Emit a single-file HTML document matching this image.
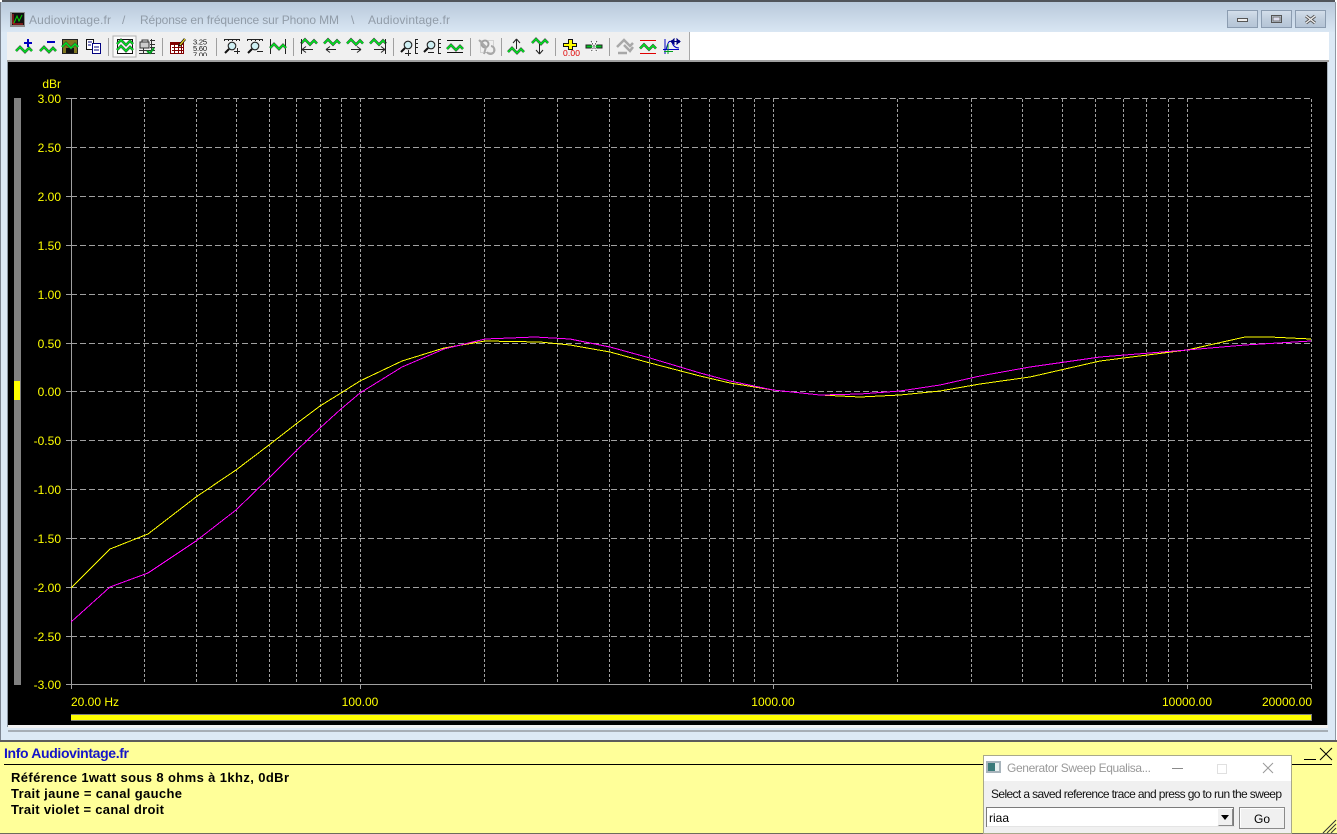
<!DOCTYPE html>
<html lang="fr"><head><meta charset="utf-8"><title>Audiovintage.fr</title>
<style>
html,body{margin:0;padding:0;width:1337px;height:834px;overflow:hidden;background:#dce9f5}
svg{display:block;position:absolute;left:0;top:0}
text{font-family:"Liberation Sans",Arial,sans-serif}
.y{fill:#ff0;font-size:12px;text-anchor:end}
.m{fill:#ff0;font-size:12px;text-anchor:middle}
.t{fill:#919ca8;font-size:12px}
.b{fill:#000;font-size:13px;font-weight:bold}
</style></head><body>
<svg width="1337" height="834" viewBox="0 0 1337 834" shape-rendering="crispEdges">
<defs>
<linearGradient id="tb" x1="0" y1="0" x2="0" y2="1"><stop offset="0" stop-color="#b6c7d9"/><stop offset="1" stop-color="#d9e6f3"/></linearGradient>
<linearGradient id="bt" x1="0" y1="0" x2="0" y2="1"><stop offset="0" stop-color="#d4dfeb"/><stop offset=".5" stop-color="#c0cedd"/><stop offset="1" stop-color="#b4c4d6"/></linearGradient>
<g id="w" fill="none" shape-rendering="auto"><path d="M0 6 4 2 9 7 13 3 16 6" stroke="#333" stroke-width="2.600"/><path d="M0 6 4 2 9 7 13 3 16 6" stroke="#00e020" stroke-width="1.600"/></g>
</defs>
<!-- window frame -->
<rect width="1337" height="834" fill="#dce9f5"/>
<rect width="1337" height="32" fill="url(#tb)"/>
<rect width="1337" height="2" fill="#50545a"/>
<rect x="0" y="0" width="1" height="740" fill="#7d8590"/>
<rect x="1336" y="0" width="1" height="740" fill="#fff"/>
<rect x="1335" y="0" width="1" height="740" fill="#8e98a3"/>
<rect x="0" y="0" width="2" height="2" fill="#fff"/><rect x="1335" y="0" width="2" height="2" fill="#fff"/>
<!-- title -->
<rect x="10" y="12" width="15" height="15" fill="#8c8c8c"/><rect x="12" y="13" width="12" height="12" fill="#111"/>
<path d="M13 24H23M13 14V24" stroke="#e02020" fill="none"/><path d="M14 23 17 16 19 21 22 15" stroke="#00d000" fill="none" shape-rendering="auto"/>
<text class="t" x="29" y="24" textLength="82">Audiovintage.fr</text>
<text class="t" x="122" y="24">/</text>
<text class="t" x="140" y="24" textLength="199">Réponse en fréquence sur Phono MM</text>
<text class="t" x="351" y="24">\</text>
<text class="t" x="368" y="24" textLength="82">Audiovintage.fr</text>
<!-- window buttons -->
<g stroke="#8b9cb0" fill="url(#bt)"><rect x="1227.500" y="10.500" width="30" height="17"/><rect x="1261.500" y="10.500" width="30" height="17"/><rect x="1295.500" y="10.500" width="30" height="17"/></g>
<rect x="1237.500" y="18.500" width="10" height="3" fill="#eee" stroke="#555"/>
<rect x="1271.500" y="15.500" width="10" height="7" fill="none" stroke="#555" stroke-width="1"/><rect x="1273" y="17" width="7" height="4" fill="#dde" stroke="#777"/>
<path d="M1306 16 1315 23M1315 16 1306 23" stroke="#555" stroke-width="3.200" shape-rendering="auto"/><path d="M1306 16 1315 23M1315 16 1306 23" stroke="#eee" stroke-width="1.400" shape-rendering="auto"/>
<!-- toolbar -->
<rect x="7" y="32" width="1322" height="29" fill="#fff"/>
<rect x="7" y="32" width="683" height="28" fill="#f0f0f0"/>
<rect x="689" y="32" width="1" height="28" fill="#a8a8a8"/>
<rect x="7" y="60" width="1322" height="2" fill="#a0a0a0"/>
<!-- separators -->
<g fill="#a0a0a0"><rect x="108" y="38" width="1" height="18"/><rect x="162" y="38" width="1" height="18"/><rect x="216" y="38" width="1" height="18"/><rect x="293" y="38" width="1" height="18"/><rect x="393" y="38" width="1" height="18"/><rect x="470" y="38" width="1" height="18"/><rect x="501" y="38" width="1" height="18"/><rect x="555" y="38" width="1" height="18"/><rect x="609" y="38" width="1" height="18"/></g>
<!-- 1 add -->
<use href="#w" x="16" y="45"/><path d="M28 39V47M24 43H32" stroke="#0000c0" stroke-width="2" fill="none"/>
<!-- 2 remove -->
<use href="#w" x="40" y="45"/><rect x="47" y="41" width="8" height="2" fill="#0000c0"/>
<!-- 3 save -->
<rect x="62.500" y="39.500" width="15" height="14" fill="#807820" stroke="#222"/><rect x="66" y="48" width="8" height="5" fill="#111"/><use href="#w" x="62" y="41"/>
<!-- 4 copy -->
<path d="M86.500 39.500H93.500V49.500H86.500Z" fill="#fff" stroke="#111"/><path d="M92.500 43.500H100.500V53.500H92.500Z" fill="#fff" stroke="#000080"/><path d="M88 42H92M88 45H91M94 47H99M94 50H99" stroke="#000080"/>
<!-- 5 active -->
<rect x="113" y="36" width="23" height="21" fill="#fafafa" stroke="#b0b0b0"/>
<rect x="117.500" y="39.500" width="15" height="14" fill="#fff" stroke="#111"/><use href="#w" x="117" y="38"/><use href="#w" x="117" y="44"/>
<!-- 6 printer -->
<rect x="140" y="42" width="9" height="6" fill="#ccc" stroke="#333"/><rect x="142" y="40" width="6" height="2" fill="#eee" stroke="#333"/>
<path d="M139 50.500H155M139 53.500H155M143.500 48V54M151.500 39V54M150 40.500H155M150 44.500H155M150 47.500H155" stroke="#333" fill="none"/><path d="M147 51 150 53 154 48" stroke="#00a020" stroke-width="2" fill="none" shape-rendering="auto"/>
<!-- 7 table pencil -->
<rect x="170.500" y="42.500" width="13" height="11" fill="#fff" stroke="#800000"/><rect x="170" y="42" width="14" height="3" fill="#800000"/>
<path d="M172 47.500H183M172 50.500H183M174.500 45V53M178.500 45V53M181.500 45V53" stroke="#800000" fill="none"/>
<path d="M179 46 185 39" stroke="#111" stroke-width="2.600" shape-rendering="auto"/><path d="M180 45 185 39" stroke="#e8d020" stroke-width="1.300" shape-rendering="auto"/>
<!-- 8 numbers -->
<g style="font-size:7.500px" fill="#111" shape-rendering="auto"><text x="193" y="44.500" textLength="14">3.25</text><text x="193" y="51" textLength="14">5.60</text><text x="193" y="57.500" textLength="14">7.00</text></g>
<rect x="190" y="56" width="20" height="4" fill="#f0f0f0"/>
<!-- 9 zoom + -->
<g id="z" fill="none"><path d="M224 39.500H240M224.500 39V41M228.500 39V41M232.500 39V41M236.500 39V41M239.500 39V41" stroke="#222"/><circle cx="232" cy="46" r="3.800" fill="#cff0f4" stroke="#222" stroke-width="1.100" shape-rendering="auto"/><path d="M229 49 225 53" stroke="#111" stroke-width="2" shape-rendering="auto"/></g>
<path d="M234 51.500H240M237.500 48V54" stroke="#222" fill="none"/>
<!-- 10 zoom - -->
<use href="#z" x="23"/><path d="M257 51.500H263" stroke="#222" fill="none"/>
<!-- 11 wave between bars -->
<path d="M270.500 39V54M285.500 39V54" stroke="#222" fill="none"/><use href="#w" x="270" y="42"/>
<!-- 12-15 wave arrows -->
<use href="#w" x="301" y="37.500"/><path d="M301.500 39V54M302 49.500H313M302 49.500 306 46.500M302 49.500 306 52.500" stroke="#222" fill="none" shape-rendering="auto"/>
<use href="#w" x="324" y="37.500"/><path d="M326 49.500H336M326 49.500 330 46.500M326 49.500 330 52.500" stroke="#222" fill="none" shape-rendering="auto"/>
<use href="#w" x="347" y="37.500"/><path d="M351 49.500H361M361 49.500 357 46.500M361 49.500 357 52.500" stroke="#222" fill="none" shape-rendering="auto"/>
<use href="#w" x="370" y="37.500"/><path d="M385.500 39V54M374 49.500H385M385 49.500 381 46.500M385 49.500 381 52.500" stroke="#222" fill="none" shape-rendering="auto"/>
<!-- 16 zoom v + -->
<g id="zv" fill="none"><circle cx="408" cy="45" r="3.800" fill="#cff0f4" stroke="#222" stroke-width="1.100" shape-rendering="auto"/><path d="M405 48 401 52" stroke="#111" stroke-width="2" shape-rendering="auto"/><path d="M415.500 39V54M416 39.500H418M416 43.500H418M416 47.500H418M416 53.500H418" stroke="#222"/></g>
<path d="M405 53.500H411M408.500 50V56" stroke="#222" fill="none"/>
<!-- 17 zoom v - -->
<use href="#zv" x="23"/><path d="M428 52.500H434" stroke="#222" fill="none"/>
<!-- 18 wave between horizontal -->
<path d="M447 40.500H463M447 52.500H463" stroke="#111" fill="none"/><use href="#w" x="447" y="43"/>
<!-- 19 disabled -->
<rect x="480.500" y="40.500" width="13" height="12" fill="none" stroke="#b5b5b5" stroke-dasharray="1 1"/>
<circle cx="485" cy="44" r="3.500" fill="none" stroke="#a0a0a0" stroke-width="2" shape-rendering="auto"/><path d="M479 40 486 47 484 54M487 52 A4 4 0 1 0 491 46" fill="none" stroke="#a8a8a8" stroke-width="2" shape-rendering="auto"/>
<!-- 20 up -->
<use href="#w" x="508" y="46"/><path d="M516.500 39V49M516.500 39 513 43M516.500 39 520 43" stroke="#222" fill="none" shape-rendering="auto"/>
<!-- 21 down -->
<use href="#w" x="532" y="37"/><path d="M539.500 44V54M539.500 54 536 50M539.500 54 543 50" stroke="#222" fill="none" shape-rendering="auto"/>
<!-- 22 cross -->
<path d="M568.500 39.500H572.500V43.500H576.500V46.500H572.500V49.500H568.500V46.500H563.500V43.500H568.500Z" fill="#ff0" stroke="#111"/>
<text x="563" y="56" textLength="17" style="font-size:8.500px" fill="#e00000" shape-rendering="auto">0.00</text>
<!-- 23 -->
<rect x="586" y="45" width="16" height="3" fill="#00c020" stroke="#222" stroke-width=".6"/>
<path d="M591 41 597 52M597 41 591 52" stroke="#fff" stroke-width="2.500" shape-rendering="auto"/><path d="M591 41 597 52M597 41 591 52" stroke="#222" stroke-width=".8" stroke-dasharray="1.500 1" shape-rendering="auto"/>
<!-- 24 disabled -->
<path d="M617 47 624 40 630 46 633 43M624 45 630 51 633 47M618 53H627" fill="none" stroke="#a8a8a8" stroke-width="2.500" shape-rendering="auto"/>
<!-- 25 -->
<path d="M640 40.500H656M640 53.500H656" stroke="#e00000" fill="none"/><use href="#w" x="640" y="42.500"/>
<!-- 26 -->
<path d="M665 39V54M663 49.500H679" stroke="#0000c0" fill="none"/><path d="M666 50C668 42 669 40 672 42 673 46 675 48 679 48" stroke="#0000c0" fill="none" shape-rendering="auto"/><path d="M668 44V54M664 51.500H673" stroke="#00a020" stroke-width="1" fill="none"/><path d="M673 41.500H679M671 41.500 674 39V44ZM680 41.500 677 39V44Z" stroke="#000080" fill="#000080"/>
<!-- plot -->
<rect x="7" y="62" width="1" height="665" fill="#8e98a3"/>
<rect x="8" y="62" width="1319" height="663" fill="#000"/>
<rect x="1327" y="62" width="1" height="665" fill="#aab4be"/>
<rect x="8" y="725" width="1320" height="3" fill="#f2f2f2"/>
<rect x="8" y="730" width="1320" height="2" fill="#a6aeb6"/>
<!-- left bar -->
<rect x="14" y="98" width="7" height="587" fill="#808080"/>
<rect x="14" y="381" width="6" height="19" fill="#ff0"/>
<!-- grid -->
<g fill="none" stroke="#a0a0a0">
<path stroke-dasharray="6 3" d="M71 98.500H1311M71 147.500H1311M71 196.500H1311M71 245.500H1311M71 294.500H1311M71 343.500H1311M71 391.500H1311M71 440.500H1311M71 489.500H1311M71 538.500H1311M71 587.500H1311M71 636.500H1311"/>
<path stroke-dasharray="3 2" d="M144.500 99V684M196.500 99V684M236.500 99V684M269.500 99V684M296.500 99V684M320.500 99V684M341.500 99V684M360.500 99V684M484.500 99V684M557.500 99V684M609.500 99V684M649.500 99V684M681.500 99V684M709.500 99V684M733.500 99V684M754.500 99V684M773.500 99V684M897.500 99V684M971.500 99V684M1022.500 99V684M1062.500 99V684M1095.500 99V684M1123.500 99V684M1146.500 99V684M1168.500 99V684M1187.500 99V684M1311.500 99V684"/>
<path d="M71.500 98V689M66 684.500H1312M66 98.500H71M66 147.500H71M66 196.500H71M66 245.500H71M66 294.500H71M66 343.500H71M66 391.500H71M66 440.500H71M66 489.500H71M66 538.500H71M66 587.500H71M66 636.500H71M360.500 684V689M773.500 684V689M1187.500 684V689M1311.500 684V689"/>
</g>
<!-- traces -->
<g fill="none" stroke-width="1">
<polyline stroke="#ffff00" points="71,588 110,549 148,534 196,497 236,470 269,445 296,424 320,406 341,393 360,381 402,361 444,348 485,341 540,342 570,345 610,352 650,363 700,376 730,383 773,390 820,395 860,397 900,395 940,391 980,384 1030,377 1100,361 1187,350 1245,337 1270,337 1311,339"/>
<polyline stroke="#ff00ff" points="71,622 110,587 148,573 196,541 236,510 269,478 296,451 320,428 341,409 360,393 402,367 444,349 485,339 535,337 570,339 610,347 650,358 700,373 730,381 773,390 820,395 860,394 900,391 940,385 980,376 1030,367 1100,357 1187,350 1245,345 1311,341"/>
</g>
<!-- labels -->
<text class="y" x="61" y="88">dBr</text>
<text class="y" x="61" y="103">3.00</text><text class="y" x="61" y="152">2.50</text><text class="y" x="61" y="201">2.00</text><text class="y" x="61" y="250">1.50</text><text class="y" x="61" y="299">1.00</text><text class="y" x="61" y="348">0.50</text><text class="y" x="61" y="396">0.00</text><text class="y" x="61" y="445">-0.50</text><text class="y" x="61" y="494">-1.00</text><text class="y" x="61" y="543">-1.50</text><text class="y" x="61" y="592">-2.00</text><text class="y" x="61" y="641">-2.50</text><text class="y" x="61" y="689">-3.00</text>
<text x="71" y="706" style="font-size:12px" fill="#ff0">20.00 Hz</text>
<text class="m" x="360" y="706">100.00</text><text class="m" x="773" y="706">1000.00</text><text class="m" x="1187" y="706">10000.00</text><text class="y" x="1312" y="706">20000.00</text>
<rect x="71" y="714" width="1241" height="7" fill="#808080"/><rect x="71" y="715" width="1240" height="5" fill="#ff0"/>
<!-- info panel -->
<rect x="0" y="740" width="1337" height="2" fill="#5c5c5c"/>
<rect x="0" y="742" width="1337" height="91" fill="#ffff99"/>
<rect x="0" y="833" width="1337" height="1" fill="#6c6c5c"/>
<text x="4" y="758" textLength="125" style="font-size:14px;font-weight:bold" fill="#1414c8">Info Audiovintage.fr</text>
<rect x="4" y="764" width="1328" height="1" fill="#000"/>
<rect x="1304" y="759" width="12" height="1" fill="#000"/>
<path d="M1320 748 1332 760M1332 748 1320 760" stroke="#000" fill="none" shape-rendering="auto"/>
<text class="b" x="11" y="782" textLength="278">Référence 1watt sous 8 ohms à 1khz, 0dBr</text>
<text class="b" x="11" y="798" textLength="171">Trait jaune = canal gauche</text>
<text class="b" x="11" y="814" textLength="153">Trait violet = canal droit</text>
<path d="M1323 833 1336 820M1327 833 1336 824M1331 833 1336 828" stroke="#333" fill="none" shape-rendering="auto"/>
<!-- dialog -->
<rect x="983" y="755" width="309" height="79" fill="#a9a98a"/>
<rect x="984" y="756" width="307" height="25" fill="#fff"/>
<rect x="984" y="781" width="307" height="52" fill="#f0f0f0"/>
<rect x="986" y="761" width="15" height="12" fill="#a8b4bc"/><rect x="988" y="763" width="7" height="8" fill="#3a7a7a"/><rect x="995" y="763" width="4" height="8" fill="#e8f0f0"/>
<text x="1007" y="772" textLength="144" style="font-size:12px" fill="#999">Generator Sweep Equalisa...</text>
<rect x="1172" y="768" width="11" height="1" fill="#8a8a8a"/>
<rect x="1217.500" y="764.500" width="9" height="9" fill="none" stroke="#e0e0e0"/>
<path d="M1263 763 1273 773M1273 763 1263 773" stroke="#9a9a9a" fill="none" shape-rendering="auto"/>
<text x="991" y="798" textLength="291" style="font-size:12px" fill="#111">Select a saved reference trace and press go to run the sweep</text>
<rect x="986.500" y="807.500" width="247" height="19" fill="#fff" stroke="#7a7a7a"/>
<rect x="987" y="826" width="248" height="1" fill="#e4e4e4"/>
<text x="989" y="822" style="font-size:12px" fill="#000">riaa</text>
<rect x="1217" y="808" width="16" height="18" fill="#f0f0f0"/><path d="M1217.500 825.500V808.500H1232.500" stroke="#fff" fill="none"/><path d="M1218.500 825.500H1232.500V809" stroke="#8a8a8a" fill="none"/>
<path d="M1221 815H1229L1225 820Z" fill="#000" shape-rendering="auto"/>
<rect x="1239.500" y="807.500" width="45" height="21" fill="#f0f0f0" stroke="#8a8a8a"/><path d="M1240.500 827.500V808.500H1284" stroke="#fff" fill="none"/>
<text x="1262" y="823" text-anchor="middle" style="font-size:12px" fill="#000">Go</text>
</svg>
</body></html>
